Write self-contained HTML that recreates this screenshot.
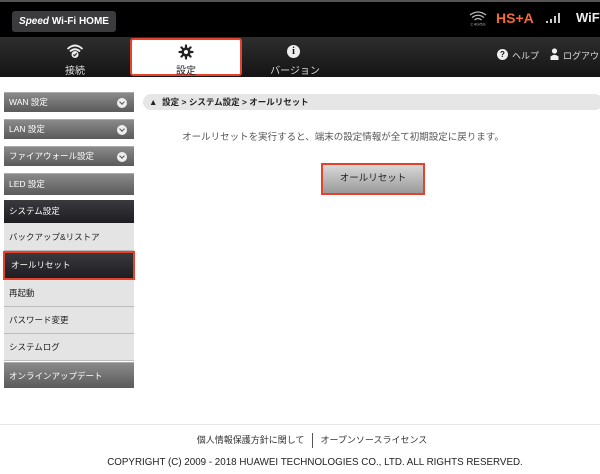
<!DOCTYPE html>
<html><head><meta charset="utf-8"><style>
*{margin:0;padding:0;box-sizing:border-box}
body{width:600px;height:474px;overflow:hidden;background:#fff;font-family:"Liberation Sans","Noto Sans CJK JP",sans-serif;position:relative}
.abs{position:absolute}
.top{left:0;top:0;width:600px;height:37px;background:#000;border-top:2px solid #555}
.logo{left:12px;top:11px;width:104px;height:21px;background:#3b3b3d;border-radius:3px;color:#fff;font-size:10px;font-weight:bold;line-height:21px;text-align:center}
.nav{left:0;top:37px;width:600px;height:40px;background:linear-gradient(#2e2e2e,#141414)}
.tab{color:#ddd;font-size:10px;text-align:center}
.sel{left:130px;top:38px;width:112px;height:38px;background:#fff;border:2px solid #e8412c;border-radius:3px}
.side{left:4px;width:130px;font-size:8.5px;padding-left:5px;color:#fff}
.g{background:linear-gradient(#8a8a8a,#5a5a5a);border-top:1px solid #aaa}
.l{background:#e4e4e4;color:#222;border-bottom:1px solid #bbb}
.d{background:linear-gradient(#3a3a3e,#1e1e22)}
.chev{position:absolute;right:7px;top:50%;margin-top:-5px;width:10px;height:10px;border-radius:50%;background:#eee}
.chev:after{content:"";position:absolute;left:3px;top:2px;width:3px;height:3px;border-right:1.5px solid #555;border-bottom:1.5px solid #555;transform:rotate(45deg)}
</style></head><body>
<div class="abs top"></div>
<div class="abs logo"><i>Speed</i> Wi-Fi HOME</div>
<svg class="abs" style="left:467px;top:10px" width="22" height="16" viewBox="0 0 22 16"><g fill="none" stroke="#bbb" stroke-width="1.2"><path d="M3 5 Q11 -1 19 5"/><path d="M5 7.5 Q11 3 17 7.5"/><path d="M7.5 10 Q11 7 14.5 10"/></g><text x="11" y="15.5" font-size="4" fill="#bbb" text-anchor="middle" font-family="Liberation Sans">2.4G/5G</text></svg>
<div class="abs" style="left:496px;top:10px;color:#f26b38;font-size:14px;font-weight:bold">HS+A</div>
<svg class="abs" style="left:546px;top:13px" width="14" height="10"><rect x="0" y="8" width="2" height="2" fill="#ccc"/><rect x="4" y="6" width="2" height="4" fill="#ccc"/><rect x="8" y="3" width="2" height="7" fill="#ccc"/><rect x="12" y="0" width="2" height="10" fill="#ccc"/></svg>
<div class="abs" style="left:576px;top:10px;color:#eee;font-size:13px;font-weight:bold">WiF</div>
<div class="abs nav"></div>
<div class="abs sel"></div>
<svg class="abs" style="left:66px;top:43px" width="18" height="16" viewBox="0 0 18 16"><g fill="none" stroke="#eee" stroke-width="1.8"><path d="M1.5 6 Q9 -1 16.5 6"/><path d="M4 8.5 Q9 4 14 8.5"/></g><circle cx="9" cy="11.5" r="3.5" fill="#eee"/><path d="M7.3 11.5 L8.6 12.8 L10.8 10.3" stroke="#222" stroke-width="1.1" fill="none"/></svg>
<div class="abs tab" style="left:55px;top:62px;width:40px">接続</div>
<svg class="abs" style="left:178px;top:44px" width="16" height="16" viewBox="0 0 16 16"><g stroke="#222" stroke-width="2.2" stroke-linecap="round"><path d="M8 1.5V14.5M1.5 8H14.5M3.4 3.4L12.6 12.6M12.6 3.4L3.4 12.6"/></g><circle cx="8" cy="8" r="4.6" fill="#222"/><circle cx="8" cy="8" r="2" fill="#fff"/></svg>
<div class="abs tab" style="left:166px;top:62px;width:40px;color:#222">設定</div>
<div class="abs" style="left:287px;top:45px;width:13px;height:13px;border-radius:50%;background:#eee;color:#111;font-size:10px;font-weight:bold;text-align:center;line-height:13px;font-family:'Liberation Serif',serif">i</div>
<div class="abs tab" style="left:265px;top:62px;width:60px">バージョン</div>
<div class="abs" style="left:497px;top:49px;width:11px;height:11px;border-radius:50%;background:#eee;color:#111;font-size:8px;font-weight:bold;text-align:center;line-height:11px">?</div>
<div class="abs" style="left:512px;top:49px;color:#ddd;font-size:9px">ヘルプ</div>
<svg class="abs" style="left:550px;top:48px" width="9" height="12"><circle cx="4.5" cy="3" r="2.6" fill="#eee"/><path d="M0.5 12 V8.5 Q4.5 5 8.5 8.5 V12Z" fill="#eee"/></svg>
<div class="abs" style="left:563px;top:49px;color:#ddd;font-size:9px;white-space:nowrap">ログアウト</div>

<div class="abs side g" style="top:92px;height:20px;line-height:19px">WAN 設定<span class="chev"></span></div>
<div class="abs side g" style="top:119px;height:20px;line-height:19px">LAN 設定<span class="chev"></span></div>
<div class="abs side g" style="top:146px;height:20px;line-height:19px">ファイアウォール設定<span class="chev"></span></div>
<div class="abs side g" style="top:173px;height:22px;line-height:21px">LED 設定</div>
<div class="abs side d" style="top:200px;height:23px;line-height:23px">システム設定</div>
<div class="abs side l" style="top:223px;height:28px;line-height:28px">バックアップ&amp;リストア</div>
<div class="abs side d" style="left:3px;width:132px;top:251px;height:29px;line-height:25px;border:2px solid #e8412c;padding-left:6px">オールリセット</div>
<div class="abs side l" style="top:280px;height:27px;line-height:27px">再起動</div>
<div class="abs side l" style="top:307px;height:27px;line-height:27px">パスワード変更</div>
<div class="abs side l" style="top:334px;height:27px;line-height:27px">システムログ</div>
<div class="abs side g" style="top:362px;height:26px;line-height:26px">オンラインアップデート</div>

<div class="abs" style="left:143px;top:94px;width:460px;height:16px;background:#e6e6e6;border-radius:8px;font-size:8.5px;font-weight:bold;color:#222;line-height:16px;padding-left:6px">▲&nbsp; 設定 &gt; システム設定 &gt; オールリセット</div>
<div class="abs" style="left:143px;top:129px;width:400px;text-align:center;font-size:9.5px;color:#555">オールリセットを実行すると、端末の設定情報が全て初期設定に戻ります。</div>
<div class="abs" style="left:321px;top:163px;width:104px;height:32px;border:2px solid #e8412c;background:linear-gradient(#d8d8d8,#9a9a9a);font-size:9.5px;color:#222;text-align:center;line-height:28px">オールリセット</div>

<div class="abs" style="left:0;top:424px;width:600px;height:1px;background:#e6e6e6"></div>
<div class="abs" style="left:12px;top:433px;width:600px;text-align:center;font-size:9px;color:#333">個人情報保護方針に関して <span style="display:inline-block;width:1px;height:15px;background:#555;vertical-align:middle;margin:0 5px"></span> オープンソースライセンス</div>
<div class="abs" style="left:15px;top:457px;width:600px;text-align:center;font-size:9.8px;color:#222">COPYRIGHT (C) 2009 - 2018 HUAWEI TECHNOLOGIES CO., LTD. ALL RIGHTS RESERVED.</div>
</body></html>
